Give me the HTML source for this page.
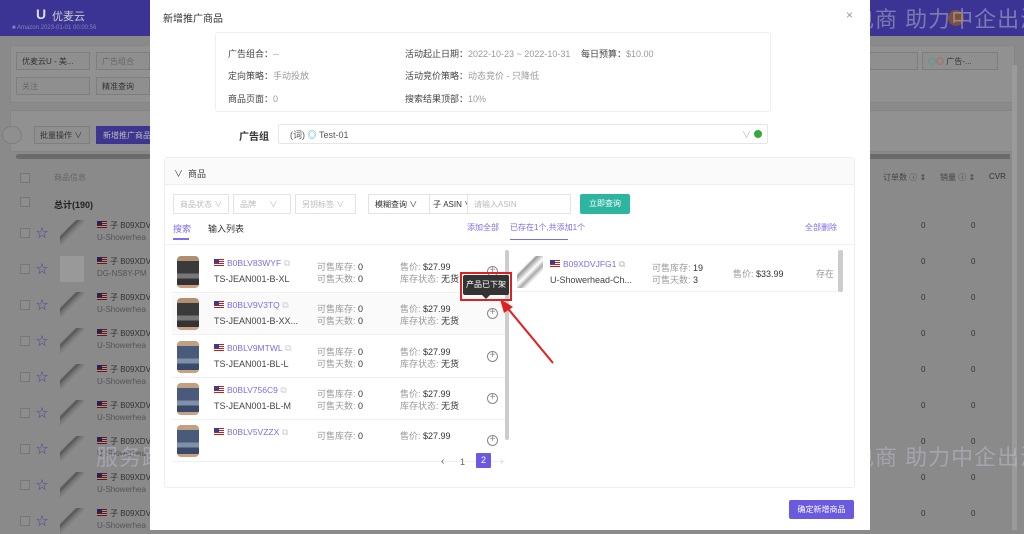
<!DOCTYPE html>
<html><head><meta charset="utf-8">
<style>
*{margin:0;padding:0;box-sizing:border-box}
body{width:1024px;height:530px;overflow:hidden;position:relative;background:#8a8a8a;font-family:"Liberation Sans","Noto Sans CJK SC",sans-serif;font-size:9px;color:#333}
.a{position:absolute;white-space:nowrap}
.hdr{position:absolute;left:0;top:0;width:1024px;height:36px;background:#3b3494}
.bgc{position:absolute;background:#919191;border:1px solid #858585}
.box{position:absolute;border:1px solid #7e7e7e;background:#8f8f8f;height:18px}
.modal{position:absolute;left:150px;top:0;width:720px;height:530px;background:#fff}
.lbl{color:#444}
.val{color:#999}
.sel{position:absolute;border:1px solid #e3e3e3;height:20px;color:#bbb;padding:4px 6px;font-size:8px;background:#fff;white-space:nowrap;overflow:hidden;line-height:11px}
.row{position:absolute;left:172px;width:333px;height:41px;border-bottom:1px solid #f0f0f0}
.img{position:absolute;width:22px;height:32px;border-radius:4px;background:linear-gradient(#b09070 0 15%,#3a3a3a 15% 55%,#777 55% 70%,#333 70% 90%,#c9a080 90%)}
.img.b{background:linear-gradient(#c0a080 0 15%,#4a5a7a 15% 55%,#8090a8 55% 70%,#3a4a6a 70% 90%,#c9a080 90%)}
.flag{display:inline-block;width:10px;height:7px;background:linear-gradient(#b22 0 14%,#fff 14% 28%,#b22 28% 42%,#fff 42% 56%,#b22 56% 70%,#fff 70% 84%,#b22 84%);position:relative;vertical-align:0;margin-right:3px}
.flag:before{content:"";position:absolute;left:0;top:0;width:5px;height:4px;background:#3c3b8e}
.asin{color:#7b6ee6;font-size:8.5px}
.plus{position:absolute;width:11px;height:11px;border:1px solid #888;border-radius:50%;font-size:10px;line-height:8px;text-align:center;color:#888}
.wm{position:absolute;font-size:22px;white-space:nowrap;letter-spacing:1px}
.cb{position:absolute;width:10px;height:10px;border:1px solid #777;background:#8d8d8d}
</style></head><body>
<div class="hdr"></div>
<div class="a" style="left:36px;top:6px;color:#ddd;font-size:14px;font-weight:bold">U</div>
<div class="a" style="left:52px;top:8px;color:#ccc;font-size:11px">优麦云</div>
<div class="a" style="left:12px;top:25px;color:#8880b8;font-size:6px">■ Amazon 2023-01-01 00:00:56</div>
<div class="a" style="left:948px;top:10px;width:16px;height:16px;border-radius:50%;background:#7a5040"></div>
<div class="bgc" style="left:10px;top:45px;width:1005px;height:58px"></div>
<div class="box" style="left:16px;top:52px;width:74px"></div><div class="a" style="left:22px;top:56px;color:#333;font-size:8px">优麦云U - 美...</div>
<div class="box" style="left:96px;top:52px;width:54px"></div><div class="a" style="left:102px;top:56px;color:#666;font-size:8px">广告组合</div>
<div class="box" style="left:16px;top:77px;width:74px"></div><div class="a" style="left:22px;top:81px;color:#666;font-size:8px">关注</div>
<div class="box" style="left:96px;top:77px;width:54px"></div><div class="a" style="left:102px;top:81px;color:#333;font-size:8px">精准查询</div>
<div class="box" style="left:868px;top:52px;width:50px"></div>
<div class="box" style="left:922px;top:52px;width:76px"></div><div class="a" style="left:928px;top:56px;color:#333;font-size:8px"><span style="color:#2a8">◎</span><span style="color:#c44">◎</span> 广告-...</div>
<div class="bgc" style="left:10px;top:110px;width:1005px;height:42px"></div>
<div class="box" style="left:2px;top:126px;width:20px;border-radius:10px"></div>
<div class="box" style="left:34px;top:126px;width:56px"></div><div class="a" style="left:40px;top:130px;color:#333;font-size:8px">批量操作 ∨</div>
<div class="a" style="left:96px;top:126px;width:56px;height:18px;background:#3d3590"></div><div class="a" style="left:103px;top:130px;color:#bbb;font-size:8px">新增推广商品</div>
<div class="a" style="left:16px;top:154px;width:135px;height:5px;background:#6b6b6b;border-radius:3px"></div>
<div class="a" style="left:870px;top:154px;width:140px;height:5px;background:#6b6b6b"></div>
<div class="a" style="left:54px;top:172px;color:#666;font-size:8px">商品信息</div>
<div class="a" style="left:883px;top:172px;color:#444;font-size:8px">订单数 ⓘ ⇕</div>
<div class="a" style="left:940px;top:172px;color:#444;font-size:8px">销量 ⓘ ⇕</div>
<div class="a" style="left:989px;top:172px;color:#333;font-size:8px">CVR</div>
<div class="a" style="left:54px;top:198px;color:#222;font-size:9px;font-weight:bold">总计(190)</div>
<div class="cb" style="left:20px;top:197px"></div>
<div class="cb" style="left:20px;top:173px"></div>
<div id="bgrows"></div>
<div class="a" style="left:1012px;top:65px;width:5px;height:465px;background:#9a9a9a"></div>

<div class="wm" style="left:760px;top:2px;color:rgba(190,190,210,.5)">服务跨境电商 助力中企出海</div>
<div class="wm" style="left:96px;top:440px;color:rgba(190,190,210,.5)">服务跨境电商 助力中企出海</div>
<div class="wm" style="left:760px;top:440px;color:rgba(190,190,210,.5)">服务跨境电商 助力中企出海</div>

<div class="modal">
<div class="a" style="left:13px;top:10px;font-size:10px;color:#333">新增推广商品</div>
<div class="a" style="left:696px;top:8px;font-size:12px;color:#999">×</div>
<div class="a" style="left:65px;top:32px;width:556px;height:80px;border:1px solid #eee;border-radius:3px"></div>
<div class="a" style="left:78px;top:47px"><span class="lbl">广告组合：</span><span class="val">--</span></div>
<div class="a" style="left:255px;top:47px"><span class="lbl">活动起止日期：</span><span class="val">2022-10-23 ~ 2022-10-31</span></div>
<div class="a" style="left:431px;top:47px"><span class="lbl">每日预算：</span><span class="val">$10.00</span></div>
<div class="a" style="left:78px;top:69px"><span class="lbl">定向策略：</span><span class="val">手动投放</span></div>
<div class="a" style="left:255px;top:69px"><span class="lbl">活动竞价策略：</span><span class="val">动态竞价 - 只降低</span></div>
<div class="a" style="left:78px;top:92px"><span class="lbl">商品页面：</span><span class="val">0</span></div>
<div class="a" style="left:255px;top:92px"><span class="lbl">搜索结果顶部：</span><span class="val">10%</span></div>
<div class="a" style="left:89px;top:128px;font-size:10px;font-weight:bold;color:#333">广告组</div>
<div class="a" style="left:128px;top:124px;width:490px;height:20px;border:1px solid #e6e6e6;border-radius:2px"></div>
<div class="a" style="left:140px;top:128px;color:#555">(词) <span style="color:#3ab;">◎</span> Test-01</div>
<div class="a" style="left:592px;top:128px;color:#bbb">∨</div>
<div class="a" style="left:604px;top:130px;width:8px;height:8px;border-radius:50%;background:#3a3"></div>
<div class="a" style="left:14px;top:157px;width:691px;height:331px;border:1px solid #eee;border-radius:3px"></div>
<div class="a" style="left:15px;top:158px;width:689px;height:27px;background:#fafafa;border-bottom:1px solid #eee"></div>
<div class="a" style="left:24px;top:167px;color:#444">∨ &nbsp;商品</div>
</div>
<div class="sel" style="left:173px;top:194px;width:56px">商品状态 ∨</div>
<div class="sel" style="left:233px;top:194px;width:58px">品牌 &nbsp;&nbsp;&nbsp;&nbsp;&nbsp;∨</div>
<div class="sel" style="left:295px;top:194px;width:61px">另钥标签 ∨</div>
<div class="sel" style="left:368px;top:194px;width:62px;color:#333">模糊查询 ∨</div>
<div class="sel" style="left:429px;top:194px;width:39px;color:#333;padding:4px 3px">子 ASIN ∨</div>
<div class="sel" style="left:467px;top:194px;width:104px">请输入ASIN</div>
<div class="a" style="left:580px;top:194px;width:50px;height:20px;background:#2eb5a0;border-radius:2px;color:#fff;font-size:8px;text-align:center;line-height:20px">立即查询</div>
<div class="a" style="left:173px;top:222px;color:#7b6ee6">搜索</div>
<div class="a" style="left:173px;top:238px;width:16px;height:2px;background:#7b6ee6"></div>
<div class="a" style="left:208px;top:222px;color:#333">输入列表</div>
<div class="a" style="left:467px;top:222px;color:#7b6ee6;font-size:8px">添加全部</div>
<div class="a" style="left:510px;top:222px;color:#7b6ee6;font-size:8px">已存在1个,共添加1个</div>
<div class="a" style="left:510px;top:239px;width:58px;height:1px;background:#7b6ee6"></div>
<div class="a" style="left:805px;top:222px;color:#7b6ee6;font-size:8px">全部删除</div>
<div class="a" style="left:164px;top:244px;width:691px;height:1px;background:#f0f0f0"></div>

<div id="rows"></div>
<div class="a" style="left:505px;top:250px;width:4px;height:190px;background:#ccc;border-radius:2px"></div>
<div class="a" style="left:512px;top:252px;width:326px;height:40px;border-bottom:1px solid #f0f0f0"></div>
<div class="a" style="left:517px;top:256px;width:26px;height:32px;background:linear-gradient(135deg,#fff 30%,#999 35%,#ddd 45%,#fff 50%,#aaa 60%,#fff 70%)"></div>
<div class="a" style="left:550px;top:259px"><span class="flag"></span><span class="asin">B09XDVJFG1</span> <span style="color:#bbb">⧉</span></div>
<div class="a" style="left:550px;top:275px;color:#444">U-Showerhead-Ch...</div>
<div class="a" style="left:652px;top:261px"><span class="val">可售库存: </span>19</div>
<div class="a" style="left:652px;top:273px"><span class="val">可售天数: </span>3</div>
<div class="a" style="left:733px;top:267px"><span class="val">售价: </span>$33.99</div>
<div class="a" style="left:816px;top:267px;color:#999">存在</div>
<div class="a" style="left:838px;top:250px;width:5px;height:42px;background:#ccc;border-radius:2px"></div>
<div class="a" style="left:463px;top:275px;width:46px;height:20px;background:#333;border-radius:2px;color:#fff;font-size:8px;text-align:center;line-height:20px">产品已下架</div>
<div class="a" style="left:482px;top:295px;border:4px solid transparent;border-top-color:#333"></div>
<div class="a" style="left:460px;top:272px;width:52px;height:29px;border:2px solid #e02020"></div>
<svg class="a" style="left:495px;top:295px" width="65" height="75"><line x1="58" y1="68" x2="10" y2="10" stroke="#e02020" stroke-width="2"/><polygon points="5,4 18,12 9,18" fill="#e02020"/></svg>
<div class="a" style="left:441px;top:456px;color:#555;font-size:10px">‹</div>
<div class="a" style="left:460px;top:457px;color:#666">1</div>
<div class="a" style="left:476px;top:453px;width:15px;height:15px;background:#6a5ae0;color:#fff;text-align:center;line-height:15px;border-radius:1px">2</div>
<div class="a" style="left:500px;top:456px;color:#ccc;font-size:10px">›</div>
<div class="a" style="left:789px;top:500px;width:65px;height:19px;background:#6a5ae0;color:#fff;font-size:8px;text-align:center;line-height:19px;border-radius:2px">确定新增商品</div>

<script>
var r='',d=[['B0BLV83WYF','TS-JEAN001-B-XL',0],['B0BLV9V3TQ','TS-JEAN001-B-XX...',0],['B0BLV9MTWL','TS-JEAN001-BL-L',1],['B0BLV756C9','TS-JEAN001-BL-M',1],['B0BLV5VZZX','',1]];
d.forEach(function(x,i){var y=252+i*42.3;
r+='<div class="row" style="top:'+y+'px;'+(i==1?'background:#fafafa':'')+'"></div>';
r+='<div class="img'+(x[2]?' b':'')+'" style="left:177px;top:'+(y+4)+'px"></div>';
r+='<div class="a" style="left:214px;top:'+(y+6)+'px"><span class="flag"></span><span class="asin">'+x[0]+'</span> <span style="color:#ccc">⧉</span></div>';
r+='<div class="a" style="left:214px;top:'+(y+22)+'px;color:#444">'+x[1]+'</div>';
r+='<div class="a" style="left:317px;top:'+(y+8)+'px"><span class="val">可售库存: </span>0</div>';
if(i<4){r+='<div class="a" style="left:317px;top:'+(y+20)+'px"><span class="val">可售天数: </span>0</div>';
r+='<div class="a" style="left:400px;top:'+(y+20)+'px"><span class="val">库存状态: </span>无货</div>';}
r+='<div class="a" style="left:400px;top:'+(y+8)+'px"><span class="val">售价: </span>$27.99</div>';
r+='<div class="plus" style="left:487px;top:'+(y+14)+'px">+</div>';});
document.getElementById('rows').outerHTML=r;
var b='',t=['U-Showerhea','DG-NS8Y-PM','U-Showerhea','U-Showerhea','U-Showerhea','U-Showerhea','U-Showerhea','U-Showerhea','U-Showerhea'];
for(var i=0;i<9;i++){var y=223+i*36;
b+='<div class="cb" style="left:20px;top:'+(y+5)+'px"></div>';
b+='<div class="a" style="left:36px;top:'+(y+1)+'px;color:#4a3f9a;font-size:12px">☆</div>';
b+='<div class="a" style="left:60px;top:'+(y-3)+'px;width:24px;height:26px;background:'+(i==1?'#999':'linear-gradient(135deg,#8a8a8a 30%,#555 35%,#777 45%,#8a8a8a 55%)')+'"></div>';
b+='<div class="a" style="left:97px;top:'+(y-3)+'px;font-size:8px;color:#333"><span class="flag" style="filter:brightness(.6)"></span>子 B09XDVF</div>';
b+='<div class="a" style="left:97px;top:'+(y+10)+'px;font-size:8px;color:#555">'+t[i]+'</div>';
b+='<div class="a" style="left:921px;top:'+(y-2)+'px;font-size:8px;color:#333">0</div>';
b+='<div class="a" style="left:971px;top:'+(y-2)+'px;font-size:8px;color:#333">0</div>';}
document.getElementById('bgrows').outerHTML=b;
</script>
</body></html>
